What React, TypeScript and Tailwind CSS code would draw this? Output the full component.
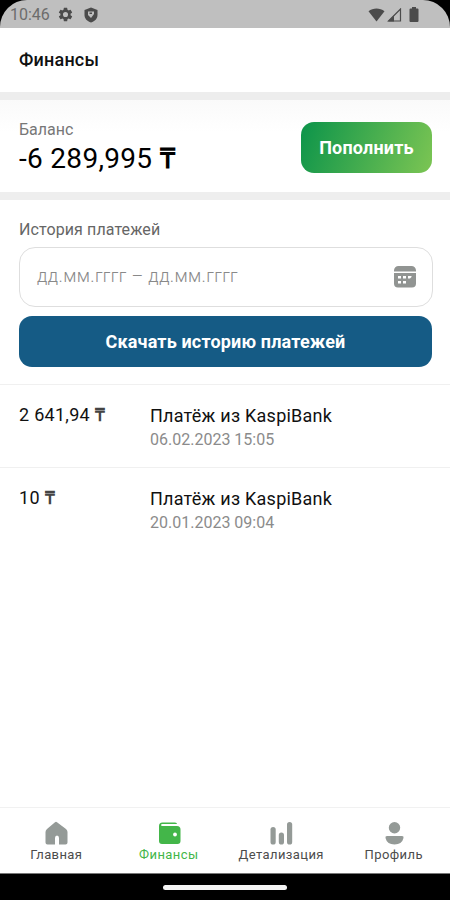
import type { ReactNode } from 'react';

const payments = [
  { amount: '2 641,94', title: 'Платёж из KaspiBank', date: '06.02.2023 15:05' },
  { amount: '10', title: 'Платёж из KaspiBank', date: '20.01.2023 09:04' },
];

function StatusBar() {
  return (
    <div className="bg-black h-7 shrink-0">
      <div className="h-7 bg-[#bfbfbf] rounded-t-[27px] flex items-center text-[#4b4b4b]">
        <span className="ml-[10px] mt-[2px] w-[40px] text-[16px] leading-5 text-[#6c6c6c] whitespace-nowrap">10:46</span>
        <svg className="ml-[7px] mt-[1px] size-[17px]" viewBox="0 0 24 24" fill="currentColor">
          <path fillRule="evenodd" d="M19.14 12.94c.04-.3.06-.61.06-.94s-.02-.64-.07-.94l2.03-1.58a.5.5 0 0 0 .12-.61l-1.92-3.32a.49.49 0 0 0-.59-.22l-2.39.96a7 7 0 0 0-1.62-.94l-.36-2.54A.48.48 0 0 0 13.92 2.4h-3.84a.48.48 0 0 0-.47.41l-.36 2.54c-.59.24-1.13.57-1.62.94l-2.39-.96a.48.48 0 0 0-.59.22L2.74 8.87a.47.47 0 0 0 .12.61l2.03 1.58a6 6 0 0 0 0 1.88l-2.03 1.58a.49.49 0 0 0-.12.61l1.92 3.32c.12.22.37.29.59.22l2.39-.96c.5.38 1.03.7 1.62.94l.36 2.54c.05.24.24.41.48.41h3.84c.24 0 .44-.17.47-.41l.36-2.54a7 7 0 0 0 1.62-.94l2.39.96c.22.08.47 0 .59-.22l1.92-3.32a.47.47 0 0 0-.12-.61ZM12 15.6a3.6 3.6 0 1 1 0-7.2 3.6 3.6 0 0 1 0 7.2Z" />
        </svg>
        <svg className="ml-[9px] mt-[1px] h-[16px] w-[16px]" viewBox="0 0 16 16">
          <path d="M8 .5 14.500 3v5c0 3.500-2.600 6.400-6.500 7.500C4.100 14.400 1.500 11.500 1.500 8V3Z" fill="currentColor" />
          <path d="M5 4.500h6v2.500l-3 4-3-3Z" fill="#bfbfbf" />
          <path d="M6.500 5.500h2.500v1.500H6.500Z" fill="currentColor" />
        </svg>
        <svg className="ml-auto mt-[1px] h-[14px] w-[17px]" viewBox="0 0 17 14">
          <path d="M.5 3.200C5 -.3 12 -.3 16.500 3.200L8.500 13.500Z" fill="currentColor" />
        </svg>
        <svg className="ml-[2px] mt-[1px] h-[14px] w-[15px]" viewBox="0 0 15 14">
          <path d="M1.500 13 13.500 1V13Z" fill="none" stroke="currentColor" strokeWidth="1.200" />
          <path d="M1 13.500 7 7.500V13.500Z" fill="currentColor" />
        </svg>
        <svg className="ml-[7px] mr-[31px] mt-[1px] h-[15px] w-[10px]" viewBox="0 0 10 15">
          <path d="M3 0h4v1.500h1.500A1 1 0 0 1 9.500 2.500V14a1 1 0 0 1-1 1h-7a1 1 0 0 1-1-1V2.500a1 1 0 0 1 1-1H3Z" fill="currentColor" />
        </svg>
      </div>
    </div>
  );
}

function NavItem({ label, active, children }: { label: string; active?: boolean; children: ReactNode }) {
  return (
    <button className={`flex-1 flex flex-col items-center pt-[13px] ${active ? 'text-[#43b649]' : 'text-[#949a97]'}`}>
      <svg className="size-6" viewBox="0 0 24 24" fill="currentColor">
        {children}
      </svg>
      <span className={`text-[13px] leading-4 mt-[2px] tracking-[0.4px] whitespace-nowrap ${active ? '' : 'text-[#4c4c4c]'}`}>{label}</span>
    </button>
  );
}

export default function App() {
  return (
    <div className="w-[450px] h-[900px] bg-white flex flex-col overflow-hidden font-[Roboto,sans-serif] text-[#111]">
      <StatusBar />
      <header className="h-16 shrink-0 flex items-center pl-[19px]">
        <h1 className="text-[18px] leading-6 font-medium tracking-[0.2px]">Финансы</h1>
      </header>
      <div className="h-2 shrink-0 bg-[#ededed]" />
      <section className="h-[92px] shrink-0 flex justify-between pl-[19px] pr-[18px] bg-linear-to-b from-[#fafafa] to-white to-35%">
        <div className="pt-[21px]">
          <div className="text-[16px] leading-[18px] text-[#777]">Баланс</div>
          <div className="text-[28px] leading-8 mt-1 text-black tracking-[0.3px] whitespace-nowrap">
            -6 289,995 <span className="font-bold">₸</span>
          </div>
        </div>
        <button className="mt-[22px] w-[131px] h-[51px] rounded-[13px] bg-linear-[110deg] from-[#0c944a] to-[#7cc553] text-white text-[18px] font-bold tracking-[0.2px]">Пополнить</button>
      </section>
      <div className="h-2 shrink-0 bg-[#eee]" />
      <section className="h-[184px] shrink-0 pl-[19px] pr-[18px] pt-5">
        <div className="text-[16px] leading-5 text-[#666] tracking-[0.1px]">История платежей</div>
        <div className="mt-[7px] -mr-px h-[60px] rounded-[16px] border border-[#dedede] flex items-center justify-between pl-[17px] pr-[16px]">
          <span className="text-[18px] leading-6 -mt-[2px] font-light text-[#898989] tracking-[0.36px] whitespace-nowrap">дд.мм.гггг – дд.мм.гггг</span>
          <svg className="size-[22px]" viewBox="0 0 22 22">
            <path d="M4.500 0h13A4.500 4.500 0 0 1 22 4.500V5.500H0V4.500A4.500 4.500 0 0 1 4.500 0ZM0 7h22v10.500a4 4 0 0 1-4 4H4a4 4 0 0 1-4-4Z" fill="#919492" />
            <path d="M4 10h3v2.500H4Zm5 0h3v2.500H9Zm5 0h3.500v1l-1.500 1.500h-2ZM4 15h3v2.500H4Zm5 0h3v2.500H9Z" fill="white" />
          </svg>
        </div>
        <button className="mt-[9px] w-[413px] h-[51px] rounded-[13px] bg-[#155b85] text-white text-[18px] font-bold tracking-[0.16px]">Скачать историю платежей</button>
      </section>
      <div className="flex-1">
        {payments.map((payment) => (
          <div key={payment.date} className="h-[82.5px] border-t border-[#f0f0f0] flex pl-[19px]">
            <div className="w-[131px] pt-[18px] text-[18px] leading-6 tracking-[0.28px] whitespace-nowrap">
              {payment.amount} <span className="font-bold text-[#444]">₸</span>
            </div>
            <div className="pt-[19px]">
              <div className="text-[18px] leading-6 tracking-[0.24px] whitespace-nowrap">{payment.title}</div>
              <div className="text-[16px] leading-6 text-[#8b8b8b] whitespace-nowrap">{payment.date}</div>
            </div>
          </div>
        ))}
      </div>
      <nav className="h-[66px] shrink-0 border-t border-[#f1f1f1] flex">
        <NavItem label="Главная">
          <path d="M11 1.200q1-.8 2 0L22 8q1.500 1.300 1.500 3v10.500q0 2-2 2H15V17q0-2.500-2-2.500T11 17v6.500H3.500q-2 0-2-2V11q0-1.700 1.500-3Z" />
        </NavItem>
        <NavItem label="Финансы" active>
          <path d="M5.500 1.500H18q2 0 2 1.500H5.500q-1.500 0-1.500 1T5.500 5H20q3.500 0 3.500 3.500V20a3 3 0 0 1-3 3H5Q2 23 2 20V5Q2 1.500 5.500 1.500Z" />
          <circle cx="18" cy="13.500" r="1.900" fill="white" />
        </NavItem>
        <NavItem label="Детализация">
          <rect x="1.500" y="6" width="5.200" height="17.500" rx="2.600" />
          <rect x="9.800" y="11.500" width="5.200" height="12" rx="2.600" />
          <rect x="18" y="1" width="5.200" height="22.500" rx="2.600" />
        </NavItem>
        <NavItem label="Профиль">
          <circle cx="12.500" cy="6.700" r="5.700" />
          <path d="M5 15h15q2 0 1.500 2-1.500 6.500-9 6.500T3.500 17Q3 15 5 15Z" />
        </NavItem>
      </nav>
      <div className="h-[27px] shrink-0 bg-black border-t border-[#777] flex justify-center pt-[11px]">
        <div className="w-[124px] h-[5px] rounded-full bg-[#f5f5f5]" />
      </div>
    </div>
  );
}
